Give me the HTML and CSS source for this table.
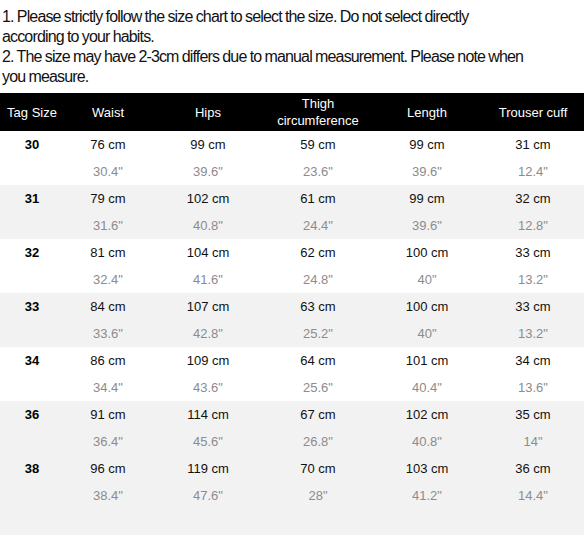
FILE: index.html
```html
<!DOCTYPE html>
<html>
<head>
<meta charset="utf-8">
<link rel="stylesheet" href="styles.css">
</head>
<body>
<div class="notes">
<p>1. Please strictly follow the size chart to select the size. Do not select directly<br>according to your habits.</p>
<p>2. The size may have 2-3cm differs due to manual measurement. Please note when<br>you measure.</p>
</div>
<table class="chart">
<colgroup>
<col class="c1"><col class="c2"><col class="c3"><col class="c4"><col class="c5"><col class="c6">
</colgroup>
<thead>
<tr><th>Tag Size</th><th>Waist</th><th>Hips</th><th class="two">Thigh<br>circumference</th><th>Length</th><th>Trouser cuff</th></tr>
</thead>
<tbody class="w">
<tr class="cm"><td class="tag">30</td><td>76 cm</td><td>99 cm</td><td>59 cm</td><td>99 cm</td><td>31 cm</td></tr>
<tr class="in"><td></td><td>30.4"</td><td>39.6"</td><td>23.6"</td><td>39.6"</td><td>12.4"</td></tr>
</tbody>
<tbody class="g">
<tr class="cm"><td class="tag">31</td><td>79 cm</td><td>102 cm</td><td>61 cm</td><td>99 cm</td><td>32 cm</td></tr>
<tr class="in"><td></td><td>31.6"</td><td>40.8"</td><td>24.4"</td><td>39.6"</td><td>12.8"</td></tr>
</tbody>
<tbody class="w">
<tr class="cm"><td class="tag">32</td><td>81 cm</td><td>104 cm</td><td>62 cm</td><td>100 cm</td><td>33 cm</td></tr>
<tr class="in"><td></td><td>32.4"</td><td>41.6"</td><td>24.8"</td><td>40"</td><td>13.2"</td></tr>
</tbody>
<tbody class="g">
<tr class="cm"><td class="tag">33</td><td>84 cm</td><td>107 cm</td><td>63 cm</td><td>100 cm</td><td>33 cm</td></tr>
<tr class="in"><td></td><td>33.6"</td><td>42.8"</td><td>25.2"</td><td>40"</td><td>13.2"</td></tr>
</tbody>
<tbody class="w">
<tr class="cm"><td class="tag">34</td><td>86 cm</td><td>109 cm</td><td>64 cm</td><td>101 cm</td><td>34 cm</td></tr>
<tr class="in"><td></td><td>34.4"</td><td>43.6"</td><td>25.6"</td><td>40.4"</td><td>13.6"</td></tr>
</tbody>
<tbody class="g">
<tr class="cm"><td class="tag">36</td><td>91 cm</td><td>114 cm</td><td>67 cm</td><td>102 cm</td><td>35 cm</td></tr>
<tr class="in"><td></td><td>36.4"</td><td>45.6"</td><td>26.8"</td><td>40.8"</td><td>14"</td></tr>
</tbody>
<tbody class="g">
<tr class="cm"><td class="tag">38</td><td>96 cm</td><td>119 cm</td><td>70 cm</td><td>103 cm</td><td>36 cm</td></tr>
<tr class="in"><td></td><td>38.4"</td><td>47.6"</td><td>28"</td><td>41.2"</td><td>14.4"</td></tr>
<tr class="pad"><td colspan="6"></td></tr>
</tbody>
</table>
</body>
</html>
```
FILE: styles.css
```css
html, body {
  margin: 0;
  padding: 0;
  background: #fff;
}
body {
  font-family: "Liberation Sans", Arial, sans-serif;
  color: #000;
}
.notes {
  padding: 7px 0 0 2px;
  font-size: 16px;
  line-height: 20px;
  letter-spacing: -0.85px;
  word-spacing: -0.4px;
  color: #111;
}
.notes p {
  margin: 0;
}
.chart {
  margin-top: 6px;
  width: 584px;
  border-collapse: collapse;
  table-layout: fixed;
  font-size: 13px;
}
.c1 { width: 64px; }
.c2 { width: 88px; }
.c3 { width: 112px; }
.c4 { width: 108px; }
.c5 { width: 110px; }
.c6 { width: 102px; }
.chart th {
  background: #000;
  color: #fff;
  font-weight: normal;
  height: 38px;
  padding: 0;
  text-align: center;
  vertical-align: middle;
  line-height: 17px;
}
.chart td {
  padding: 0;
  text-align: center;
  vertical-align: middle;
  height: 27px;
  line-height: 15px;
}
.chart .cm td {
  color: #111;
}
.chart .in td {
  color: #8c8c8c;
}
.chart td.tag {
  font-weight: bold;
  color: #000;
}
.g td {
  background: #f2f2f2;
}
.chart .pad td {
  height: 26px;
}
```
